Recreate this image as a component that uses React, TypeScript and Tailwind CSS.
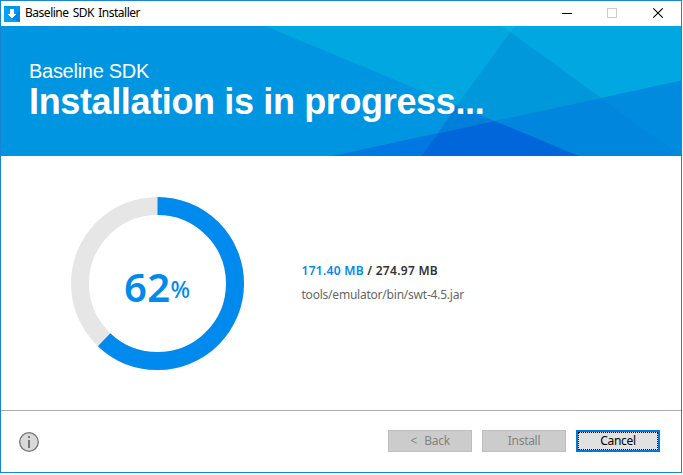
import React from "react";

function TitleBar() {
  return (
    <div className="flex h-[25px] items-center bg-white pl-[3px]">
      <svg width="16" height="16" viewBox="0 0 16 16" shapeRendering="crispEdges" className="shrink-0">
        <rect width="16" height="16" fill="#0095f0" />
        <path d="M0 0L16 16H0Z" fill="#00a2f4" />
        <path d="M7 13L16 16V4L12 8Z" fill="#0084e4" />
        <path d="M6 3H10V8H12V9H11V10H10V11H9V12H8V13H8V12H7V11H6V10H5V9H4V8H6Z" fill="#fff" />
      </svg>
      <span className="ml-[5px] pb-[2px] font-['Noto_Sans',sans-serif] text-[12px] leading-[16px] tracking-[-0.48px] [word-spacing:1.5px] whitespace-nowrap text-black">
        Baseline SDK Installer
      </span>
      <svg width="120" height="25" viewBox="561 1 120 25" className="ml-auto shrink-0" fill="none">
        <rect x="562" y="13" width="10" height="1" fill="#000" />
        <rect x="607.5" y="8.5" width="9" height="9" stroke="#ccc" />
        <path d="M653.3 8.3L662.7 17.7M662.7 8.3L653.3 17.7" stroke="#000" strokeWidth="1.1" />
      </svg>
    </div>
  );
}

function Banner() {
  return (
    <div className="relative h-[130px] overflow-hidden bg-[#0095e0]">
      <svg width="680" height="130" viewBox="1 26 680 130" className="absolute inset-0">
        <polygon points="265,26 681,26 681,156 579,156" fill="#00a7e0" />
        <polygon points="501.7,26 515,26 510.5,32.2" fill="#00b4e6" />
        <polygon points="510.5,32.2 681,156 579,156 456.5,105.5" fill="#0098da" />
        <polygon points="456.5,105.5 494.5,121 438,133" fill="#007fda" />
        <polygon points="333,156 681,80.7 681,156" fill="#0086dc" />
        <polygon points="600,98.2 681,80.7 681,156" fill="#008bde" />
        <polygon points="333,156 438,133 421.7,156" fill="#0078e2" />
        <polygon points="421.7,156 438,133.2 494.5,121 579,156" fill="#0066d9" />
      </svg>
      <div className="relative flex flex-col pt-[34px] pl-[28px] font-['Liberation_Sans',Arial,sans-serif] whitespace-nowrap text-white">
        <span className="text-[20px] leading-[23px] tracking-[-0.28px]">Baseline SDK</span>
        <span className="text-[36px] leading-[38px] font-bold tracking-[-0.36px]">Installation is in progress...</span>
      </div>
    </div>
  );
}

function ProgressRing({ percent }: { percent: number }) {
  const circumference = 2 * Math.PI * 77.5;
  return (
    <div className="grid size-[173px] shrink-0 place-items-center">
      <svg width="173" height="173" viewBox="0 0 173 173" fill="none" strokeWidth="18" className="col-start-1 row-start-1">
        <circle cx="86.5" cy="86.5" r="77.5" stroke="#e6e6e6" />
        <circle
          cx="86.5"
          cy="86.5"
          r="77.5"
          stroke="#008aee"
          strokeDasharray={`${(circumference * percent) / 100} ${circumference}`}
          transform="rotate(-90 86.5 86.5)"
        />
      </svg>
      <div className="col-start-1 row-start-1 flex items-start pt-[10px] pr-px font-['Noto_Sans',sans-serif] text-[#008aee]">
        <span className="text-[40px] leading-[48px] font-semibold tracking-[0.3px]">{percent}</span>
        <span className="text-[23px] leading-[52px] font-medium">%</span>
      </div>
    </div>
  );
}

function Footer() {
  return (
    <div className="flex h-[62px] items-center border-t border-[#acacac] pr-[21px] pl-[18px]">
      <svg width="20" height="20" viewBox="0 0 20 20" className="shrink-0">
        <circle cx="10" cy="10" r="9.3" fill="#d9d9d9" stroke="#777" strokeWidth="1.3" />
        <rect x="9" y="4" width="2" height="2" fill="#777" />
        <rect x="9" y="8" width="2" height="8" fill="#777" />
      </svg>
      <div className="ml-auto flex gap-[10px] pb-[2px] font-['Noto_Sans',sans-serif] text-[12px] leading-[16px] tracking-[-0.3px]">
        <button className="flex h-[22px] w-[84px] items-center justify-center border border-[#bfbfbf] bg-[#ccc] [word-spacing:1px] whitespace-pre text-[#838383]">{"<  Back"}</button>
        <button className="flex h-[22px] w-[84px] items-center justify-center border border-[#bfbfbf] bg-[#ccc] text-[#838383]">Install</button>
        <button className="flex h-[22px] w-[84px] border-2 border-[#0078d7] bg-[#e1e1e1] text-black">
          <span className="flex h-full w-full items-center justify-center border border-dotted border-black">Cancel</span>
        </button>
      </div>
    </div>
  );
}

export default function App() {
  return (
    <div className="h-[475px] w-[683px] overflow-hidden bg-white">
      <div className="flex h-[473px] w-[682px] flex-col border border-[#1883d7] bg-white">
        <TitleBar />
        <Banner />
        <div className="flex flex-1 items-start pt-[41px] pl-[70px]">
          <ProgressRing percent={62} />
          <div className="ml-[57.5px] flex flex-col pt-[62px] font-['Noto_Sans',sans-serif] text-[12px] whitespace-nowrap">
            <span className="leading-[24px] font-semibold tracking-[0.28px] text-[#333]">
              <span className="text-[#008aee]">171.40 MB</span> / 274.97 MB
            </span>
            <span className="leading-[24px] tracking-[-0.22px] text-[#666]">tools/emulator/bin/swt-4.5.jar</span>
          </div>
        </div>
        <Footer />
      </div>
    </div>
  );
}
